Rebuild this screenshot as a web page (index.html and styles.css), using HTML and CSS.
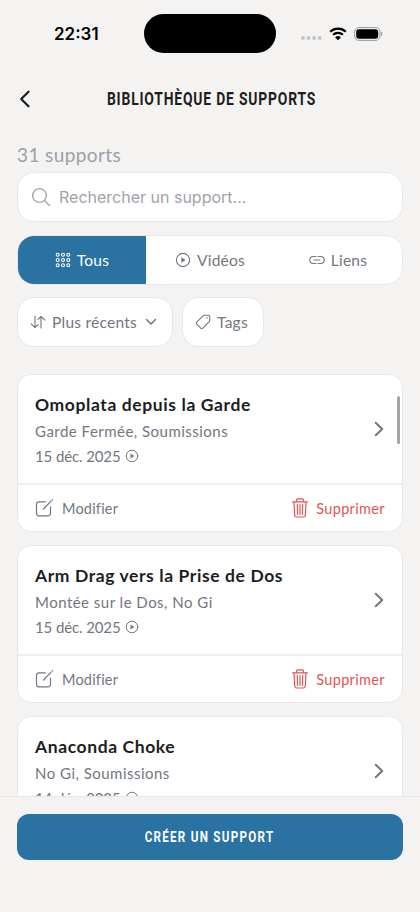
FILE: index.html
```
<!DOCTYPE html>
<html lang="fr">
<head>
<meta charset="utf-8">
<meta name="viewport" content="width=device-width, initial-scale=1">
<title>Bibliothèque de supports</title>
<link rel="stylesheet" href="styles.css">
</head>
<body>
<svg class="defs" width="0" height="0">
  <symbol id="play" viewBox="0 0 16 16"><circle cx="8" cy="8" r="6.6"/><path class="solid" d="M6.300 5.200v5.600l4.400-2.800z"/></symbol>
  <symbol id="edit" viewBox="0 0 20 20"><path d="M10.300 3.800H4A2.500 2.500 0 0 0 1.500 6.300v9A2.500 2.500 0 0 0 4 17.800h9a2.500 2.500 0 0 0 2.500-2.500V9M8.500 11l7.600-7.800M17.200 2.100l.5-.5"/></symbol>
  <symbol id="trash" viewBox="0 0 18 20"><path d="M1.500 3.800h15M5.300 3.500l.4-1.800c.1-.5.5-.8 1-.8h4.6c.5 0 .9.3 1 .8l.4 1.800M3 4l.7 13.200c.1 1.100.8 1.800 1.800 1.800h7c1 0 1.700-.7 1.800-1.800L15 4M6.300 6.500l.3 9.800M9 6.500v9.800M11.700 6.500l-.3 9.800"/></symbol>
  <symbol id="next" viewBox="0 0 10 16"><path d="M1.700 1.700 8.200 8l-6.500 6.300"/></symbol>
</svg>
<div class="screen">
  <div class="status">
    <span class="time">22:31</span>
    <span class="island"></span>
    <span class="indicators">
      <svg width="21" height="4" viewBox="0 0 21 4" fill="#c5c5c5"><circle cx="2" cy="2" r="1.900"/><circle cx="7.600" cy="2" r="1.900"/><circle cx="13.200" cy="2" r="1.900"/><circle cx="18.800" cy="2" r="1.900"/></svg>
      <svg class="wifi" width="18" height="14" viewBox="0 0 18 14"><path d="M1.200 4.700a11.300 11.300 0 0 1 15.600 0M4.100 7.700a7.200 7.200 0 0 1 9.800 0" fill="none" stroke="#000" stroke-width="2.200"/><path d="M9 13.300l-2.900-2.900a4.200 4.200 0 0 1 5.800 0z"/></svg>
      <svg class="battery" width="29" height="14" viewBox="0 0 29 14"><rect x=".6" y=".6" width="25.300" height="12.800" rx="4.200" fill="none" stroke="#999" stroke-width="1"/><rect x="2.200" y="2.200" width="22" height="9.600" rx="2.800"/><path d="M27 4.700c1.700.6 1.700 4 0 4.600z" fill="#999"/></svg>
    </span>
  </div>
  <header class="header">
    <svg class="back" width="12" height="18" viewBox="0 0 12 18"><path d="M9.500 1.700 2.200 9l7.300 7.300"/></svg>
    <h1><span>BIBLIOTHÈQUE DE SUPPORTS</span></h1>
  </header>
  <main class="content">
    <p class="count">31 supports</p>
    <div class="search">
      <svg class="ic" width="20" height="20" viewBox="0 0 20 20"><circle cx="8.500" cy="8.500" r="6.900"/><path d="m13.500 13.500 5 5"/></svg>
      <span>Rechercher un support...</span>
    </div>
    <nav class="tabs">
      <a class="tab active"><svg class="ic" width="16" height="16" viewBox="0 0 16 16"><g><circle cx="2.700" cy="2.700" r="1.500"/><circle cx="8" cy="2.700" r="1.500"/><circle cx="13.300" cy="2.700" r="1.500"/><circle cx="2.700" cy="8" r="1.500"/><circle cx="8" cy="8" r="1.500"/><circle cx="13.300" cy="8" r="1.500"/><circle cx="2.700" cy="13.300" r="1.500"/><circle cx="8" cy="13.300" r="1.500"/><circle cx="13.300" cy="13.300" r="1.500"/></g></svg><span>Tous</span></a>
      <a class="tab"><svg class="ic" width="16" height="16"><use href="#play"/></svg><span>Vidéos</span></a>
      <a class="tab"><svg class="ic" width="16" height="16" viewBox="0 0 16 16"><path d="M7 4.500H4.300a3.500 3.500 0 0 0 0 7H7M9 4.500h2.700a3.500 3.500 0 0 1 0 7H9M5 8h6"/></svg><span>Liens</span></a>
    </nav>
    <div class="filters">
      <a class="chip sort"><svg class="ic" width="16" height="14" viewBox="0 0 16 14"><path d="M5 1v11.500M1 8.800l4 3.700 3-2.800M11 13V1.500M8 4.300l3-2.800 4 3.700"/></svg><span>Plus récents</span><svg class="ic down" width="12" height="8" viewBox="0 0 12 8"><path d="m1.500 1.500 4.500 4.500 4.500-4.500"/></svg></a>
      <a class="chip"><svg class="ic" width="16" height="16" viewBox="0 0 16 16"><path d="M9.300 1.300h4.100c.7 0 1.300.6 1.300 1.300v4.100c0 .4-.1.700-.4 1L7.800 14.200c-.6.600-1.500.6-2 0L1.700 10.100c-.6-.6-.6-1.500 0-2L8.300 1.700c.3-.3.600-.4 1-.4z"/><circle class="solid" cx="12" cy="4" r=".8"/></svg><span>Tags</span></a>
    </div>
    <section class="list">
      <article class="card">
        <div class="info"><div><h2>Omoplata depuis la Garde</h2><p class="cats">Garde Fermée, Soumissions</p><p class="date"><span>15 déc. 2025</span><svg class="ic" width="14" height="14"><use href="#play"/></svg></p></div><svg class="ic next" width="10" height="16"><use href="#next"/></svg></div>
        <div class="actions"><a><svg class="ic" width="20" height="20"><use href="#edit"/></svg><span>Modifier</span></a><a class="delete"><svg class="ic" width="18" height="20"><use href="#trash"/></svg><span>Supprimer</span></a></div>
      </article>
      <article class="card">
        <div class="info"><div><h2>Arm Drag vers la Prise de Dos</h2><p class="cats">Montée sur le Dos, No Gi</p><p class="date"><span>15 déc. 2025</span><svg class="ic" width="14" height="14"><use href="#play"/></svg></p></div><svg class="ic next" width="10" height="16"><use href="#next"/></svg></div>
        <div class="actions"><a><svg class="ic" width="20" height="20"><use href="#edit"/></svg><span>Modifier</span></a><a class="delete"><svg class="ic" width="18" height="20"><use href="#trash"/></svg><span>Supprimer</span></a></div>
      </article>
      <article class="card">
        <div class="info"><div><h2>Anaconda Choke</h2><p class="cats">No Gi, Soumissions</p><p class="date"><span>14 déc. 2025</span><svg class="ic" width="14" height="14"><use href="#play"/></svg></p></div><svg class="ic next" width="10" height="16"><use href="#next"/></svg></div>
      </article>
      <i class="scrollbar"></i>
    </section>
  </main>
  <footer class="footer"><a class="create"><span>CRÉER UN SUPPORT</span></a></footer>
</div>
</body>
</html>
```
FILE: styles.css
```
* { box-sizing: border-box; }
body { margin: 0; background: #f4f3f1; font-family: Lato, sans-serif; color: #737680; }
h1, h2, p { margin: 0; }
.defs { position: absolute; }
.screen { width: 420px; height: 912px; display: flex; flex-direction: column; overflow: hidden; }
svg { flex: none; display: block; }
span { white-space: nowrap; }
.ic { fill: none; stroke: currentColor; stroke-width: 1.1; stroke-linecap: round; stroke-linejoin: round; }
.solid { fill: currentColor; stroke: none; }

.status { height: 67px; display: grid; grid-template-columns: 144px 132px 1fr; align-items: center; flex: none; }
.time { padding-left: 54px; font: 600 17px/20px Inter, sans-serif; letter-spacing: 0; color: #000; }
.island { height: 39px; border-radius: 20px; background: #000; }
.indicators { display: flex; align-items: center; padding-left: 25px; }
.indicators svg:first-child { margin-top: 9px; }
.wifi { margin-left: 7px; }
.battery { margin-left: 7px; }

.header { height: 64px; display: grid; grid-template-columns: 42px 1fr 39px; align-items: center; flex: none; }
.back { margin-left: 19px; fill: none; stroke: #1d1d1d; stroke-width: 2.2; stroke-linecap: round; stroke-linejoin: round; }
h1 { display: flex; justify-content: center; font: 700 18.5px/24px Roboto, sans-serif; letter-spacing: 1.1px; color: #1e1e1e; }
h1 span { transform: scaleX(.75); }

.content { flex: 1; min-height: 0; padding: 12px 17px 0; display: flex; flex-direction: column; }
.count { font-size: 19px; line-height: 24px; letter-spacing: .4px; color: #9c9fa7; height: 29px; flex: none; }
.search, .tabs, .chip { background: #fff; border: 1px solid #e9e8e8; border-radius: 17px; }
.search { height: 50px; flex: none; display: flex; align-items: center; gap: 8px; padding-left: 13px; color: #a0a3aa; font: 400 16px/22px Inter, sans-serif; }
.search .ic { stroke-width: 1.4; }
.tabs { height: 50px; flex: none; margin-top: 13px; display: grid; grid-template-columns: repeat(3, 1fr); overflow: hidden; font-size: 15.5px; letter-spacing: .25px; }
.tab { display: flex; align-items: center; justify-content: center; gap: 6px; }
.active { background: #2972a1; color: #fff; }
.filters { display: flex; gap: 9px; margin-top: 12px; flex: none; font-size: 15.5px; letter-spacing: .25px; }
.chip { height: 50px; width: 82px; padding-left: 12px; display: flex; align-items: center; gap: 6px; }
.sort { width: 156px; }
.down { margin-left: 2px; stroke-width: 1.5; }

.list { position: relative; flex: 1; min-height: 0; margin-top: 27px; overflow: hidden; }
.card { height: 158px; margin-bottom: 13px; background: #fff; border: 1px solid #e9e8e8; border-radius: 14px; }
.info { height: 110px; padding: 18px 18px 0 17px; display: flex; justify-content: space-between; border-bottom: 2px solid #efeff0; }
h2 { font-size: 17.5px; line-height: 24px; font-weight: 700; letter-spacing: .6px; color: #1d1d1f; white-space: nowrap; }
.cats { margin-top: 3px; font-size: 15px; line-height: 22px; letter-spacing: .48px; white-space: nowrap; }
.date { margin-top: 3px; font-size: 15px; line-height: 22px; letter-spacing: -.12px; display: flex; align-items: center; gap: 5px; }
.next { margin-top: 28px; stroke-width: 2; }
.actions { height: 46px; display: flex; align-items: center; justify-content: space-between; padding: 0 17px; font-size: 14.5px; letter-spacing: .2px; }
.actions a { display: flex; align-items: center; gap: 7px; }
.actions .ic { stroke-width: 1.2; }
.delete { color: #e25454; letter-spacing: .35px; }
.scrollbar { position: absolute; right: 3px; top: 22px; width: 3px; height: 48px; border-radius: 2px; background: #a5a5a5; }

.footer { height: 116px; flex: none; border-top: 1px solid #e6e6e7; padding: 17px 17px 0; }
.create { height: 46px; border-radius: 12px; background: #2972a1; color: #fff; display: flex; align-items: center; justify-content: center; font: 700 15.5px/20px Roboto, sans-serif; letter-spacing: 1.7px; }
.create span { transform: scaleX(.75); }
```
